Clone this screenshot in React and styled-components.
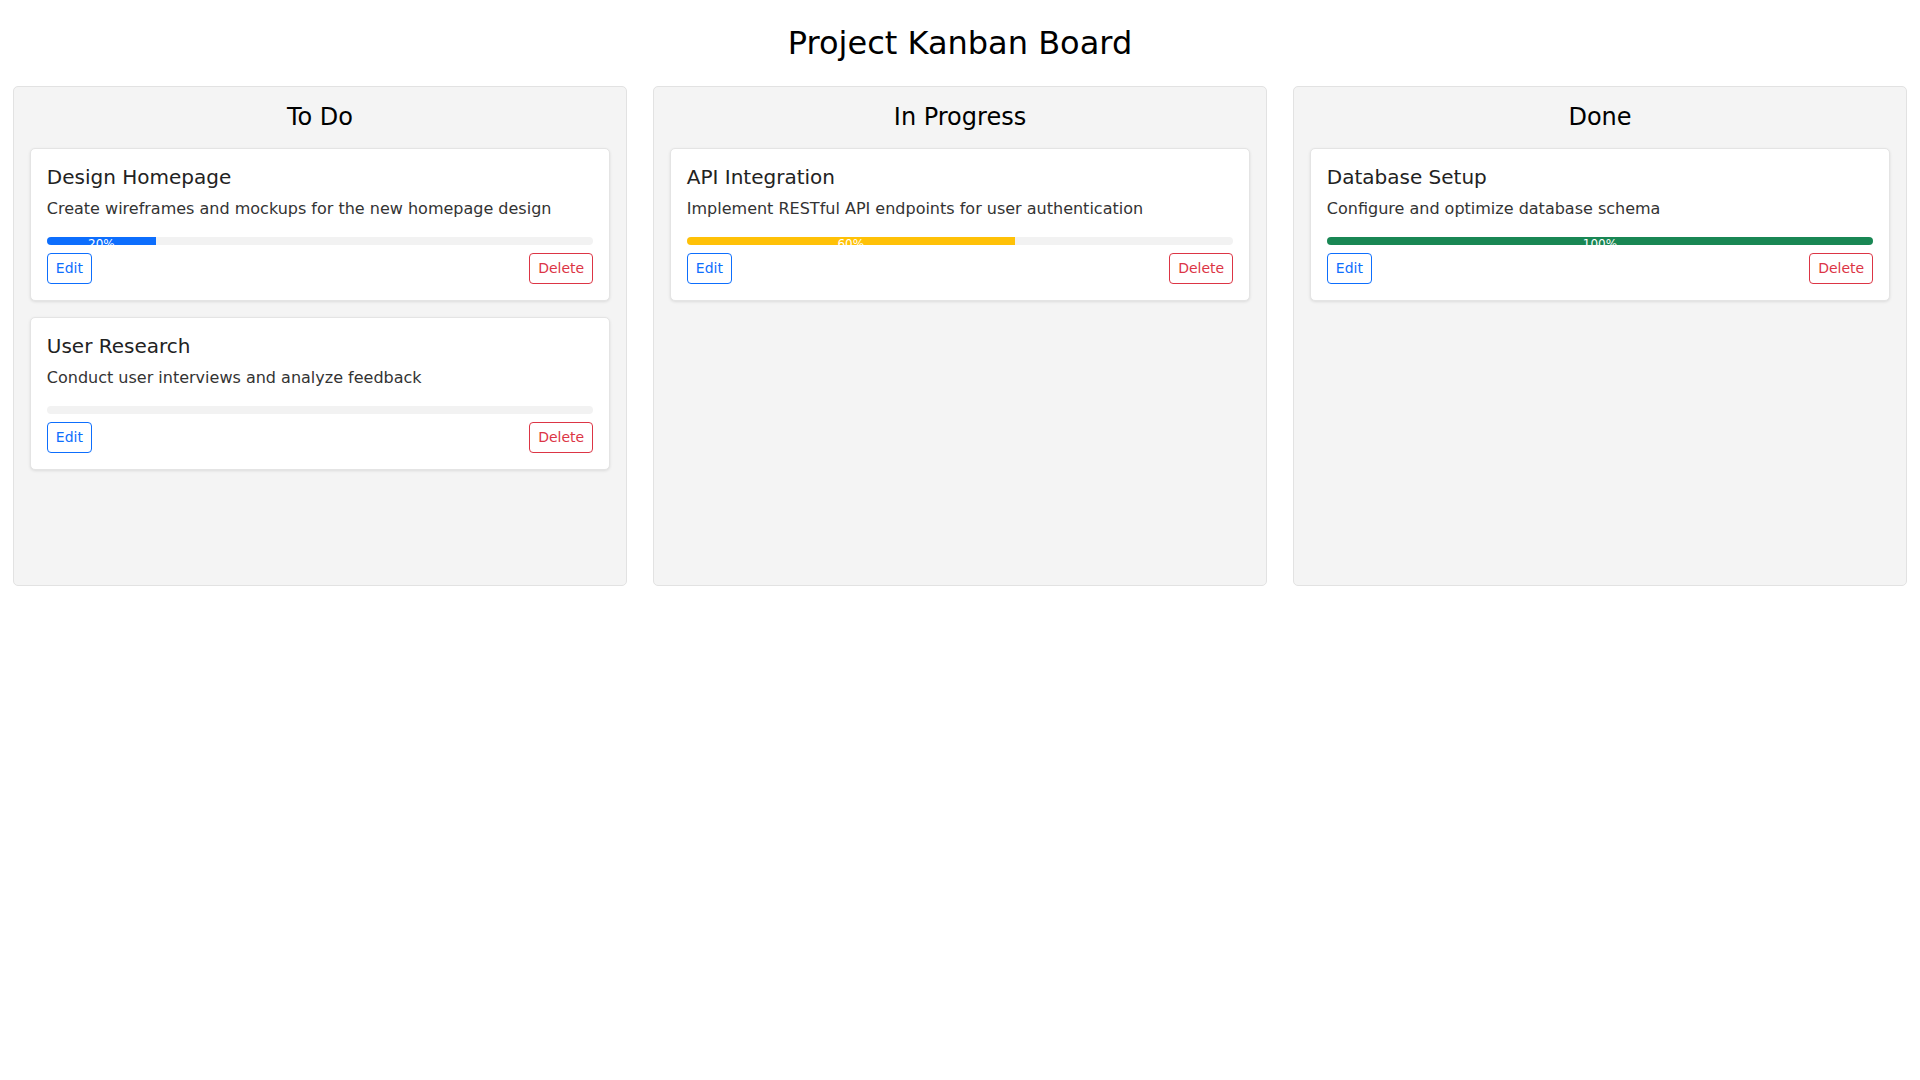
import styled, { createGlobalStyle } from "styled-components";

const GlobalStyle = createGlobalStyle`
  * {
    box-sizing: border-box;
  }
  body {
    margin: 0;
    background: #ffffff;
    font-family: "DejaVu Sans", "Liberation Sans", sans-serif;
    color: #000;
  }
`;

const Page = styled.div`
  width: 100%;
`;

const Title = styled.h1`
  font-size: 32px;
  font-weight: 400;
  text-align: center;
  margin: 24px 0;
  line-height: normal;
`;

const Board = styled.div`
  display: flex;
  justify-content: space-around;
  align-items: flex-start;
`;

const Column = styled.section`
  width: 32%;
  min-height: 500px;
  background: #f4f4f4;
  border: 1px solid #e2e2e2;
  border-radius: 5px;
  padding: 16px;

  h2 {
    font-size: 24px;
    font-weight: 400;
    text-align: center;
    margin: 0 0 17px;
    line-height: normal;
  }
`;

const Card = styled.div`
  background: #ffffff;
  border: 1px solid #e4e4e4;
  border-radius: 5px;
  padding: 16px;
  margin-bottom: 16px;
  box-shadow: 0 1px 3px rgba(0, 0, 0, 0.1);

  h3 {
    font-size: 20px;
    font-weight: 400;
    color: #222;
    margin: 0 0 8px;
    line-height: normal;
  }

  p {
    font-size: 16px;
    line-height: 24px;
    color: #333;
    margin: 0 0 16px;
  }
`;

const Track = styled.div`
  height: 8px;
  background: #f2f2f2;
  border-radius: 4px;
  overflow: hidden;
  margin-bottom: 8px;
`;

const Fill = styled.div`
  height: 100%;
  background: ${({ $color }) => $color};
  color: #fff;
  font-size: 12px;
  line-height: normal;
  text-align: center;
  white-space: nowrap;
  overflow: hidden;
`;

const Actions = styled.div`
  display: flex;
  justify-content: space-between;
  align-items: center;
`;

const Button = styled.button`
  font-family: inherit;
  font-size: 14px;
  line-height: 21px;
  padding: 4px 8px;
  background: #fff;
  border-radius: 4px;
  border: 1px solid ${({ $danger }) => ($danger ? "#dc3545" : "#0d6efd")};
  color: ${({ $danger }) => ($danger ? "#dc3545" : "#0d6efd")};
  cursor: pointer;
`;

const columns = [
  {
    id: "todo",
    title: "To Do",
    tasks: [
      {
        id: 1,
        title: "Design Homepage",
        desc: "Create wireframes and mockups for the new homepage design",
        progress: 20,
        color: "#0d6efd",
      },
      {
        id: 2,
        title: "User Research",
        desc: "Conduct user interviews and analyze feedback",
        progress: 0,
        color: "#0d6efd",
      },
    ],
  },
  {
    id: "progress",
    title: "In Progress",
    tasks: [
      {
        id: 3,
        title: "API Integration",
        desc: "Implement RESTful API endpoints for user authentication",
        progress: 60,
        color: "#ffc107",
      },
    ],
  },
  {
    id: "done",
    title: "Done",
    tasks: [
      {
        id: 4,
        title: "Database Setup",
        desc: "Configure and optimize database schema",
        progress: 100,
        color: "#198754",
      },
    ],
  },
];

export default function App() {
  return (
    <Page>
      <GlobalStyle />
      <Title>Project Kanban Board</Title>
      <Board>
        {columns.map((col) => (
          <Column key={col.id}>
            <h2>{col.title}</h2>
            {col.tasks.map((task) => (
              <Card key={task.id}>
                <h3>{task.title}</h3>
                <p>{task.desc}</p>
                <Track>
                  <Fill $color={task.color} style={{ width: `${task.progress}%` }}>
                    {task.progress > 0 ? `${task.progress}%` : ""}
                  </Fill>
                </Track>
                <Actions>
                  <Button>Edit</Button>
                  <Button $danger>Delete</Button>
                </Actions>
              </Card>
            ))}
          </Column>
        ))}
      </Board>
    </Page>
  );
}
